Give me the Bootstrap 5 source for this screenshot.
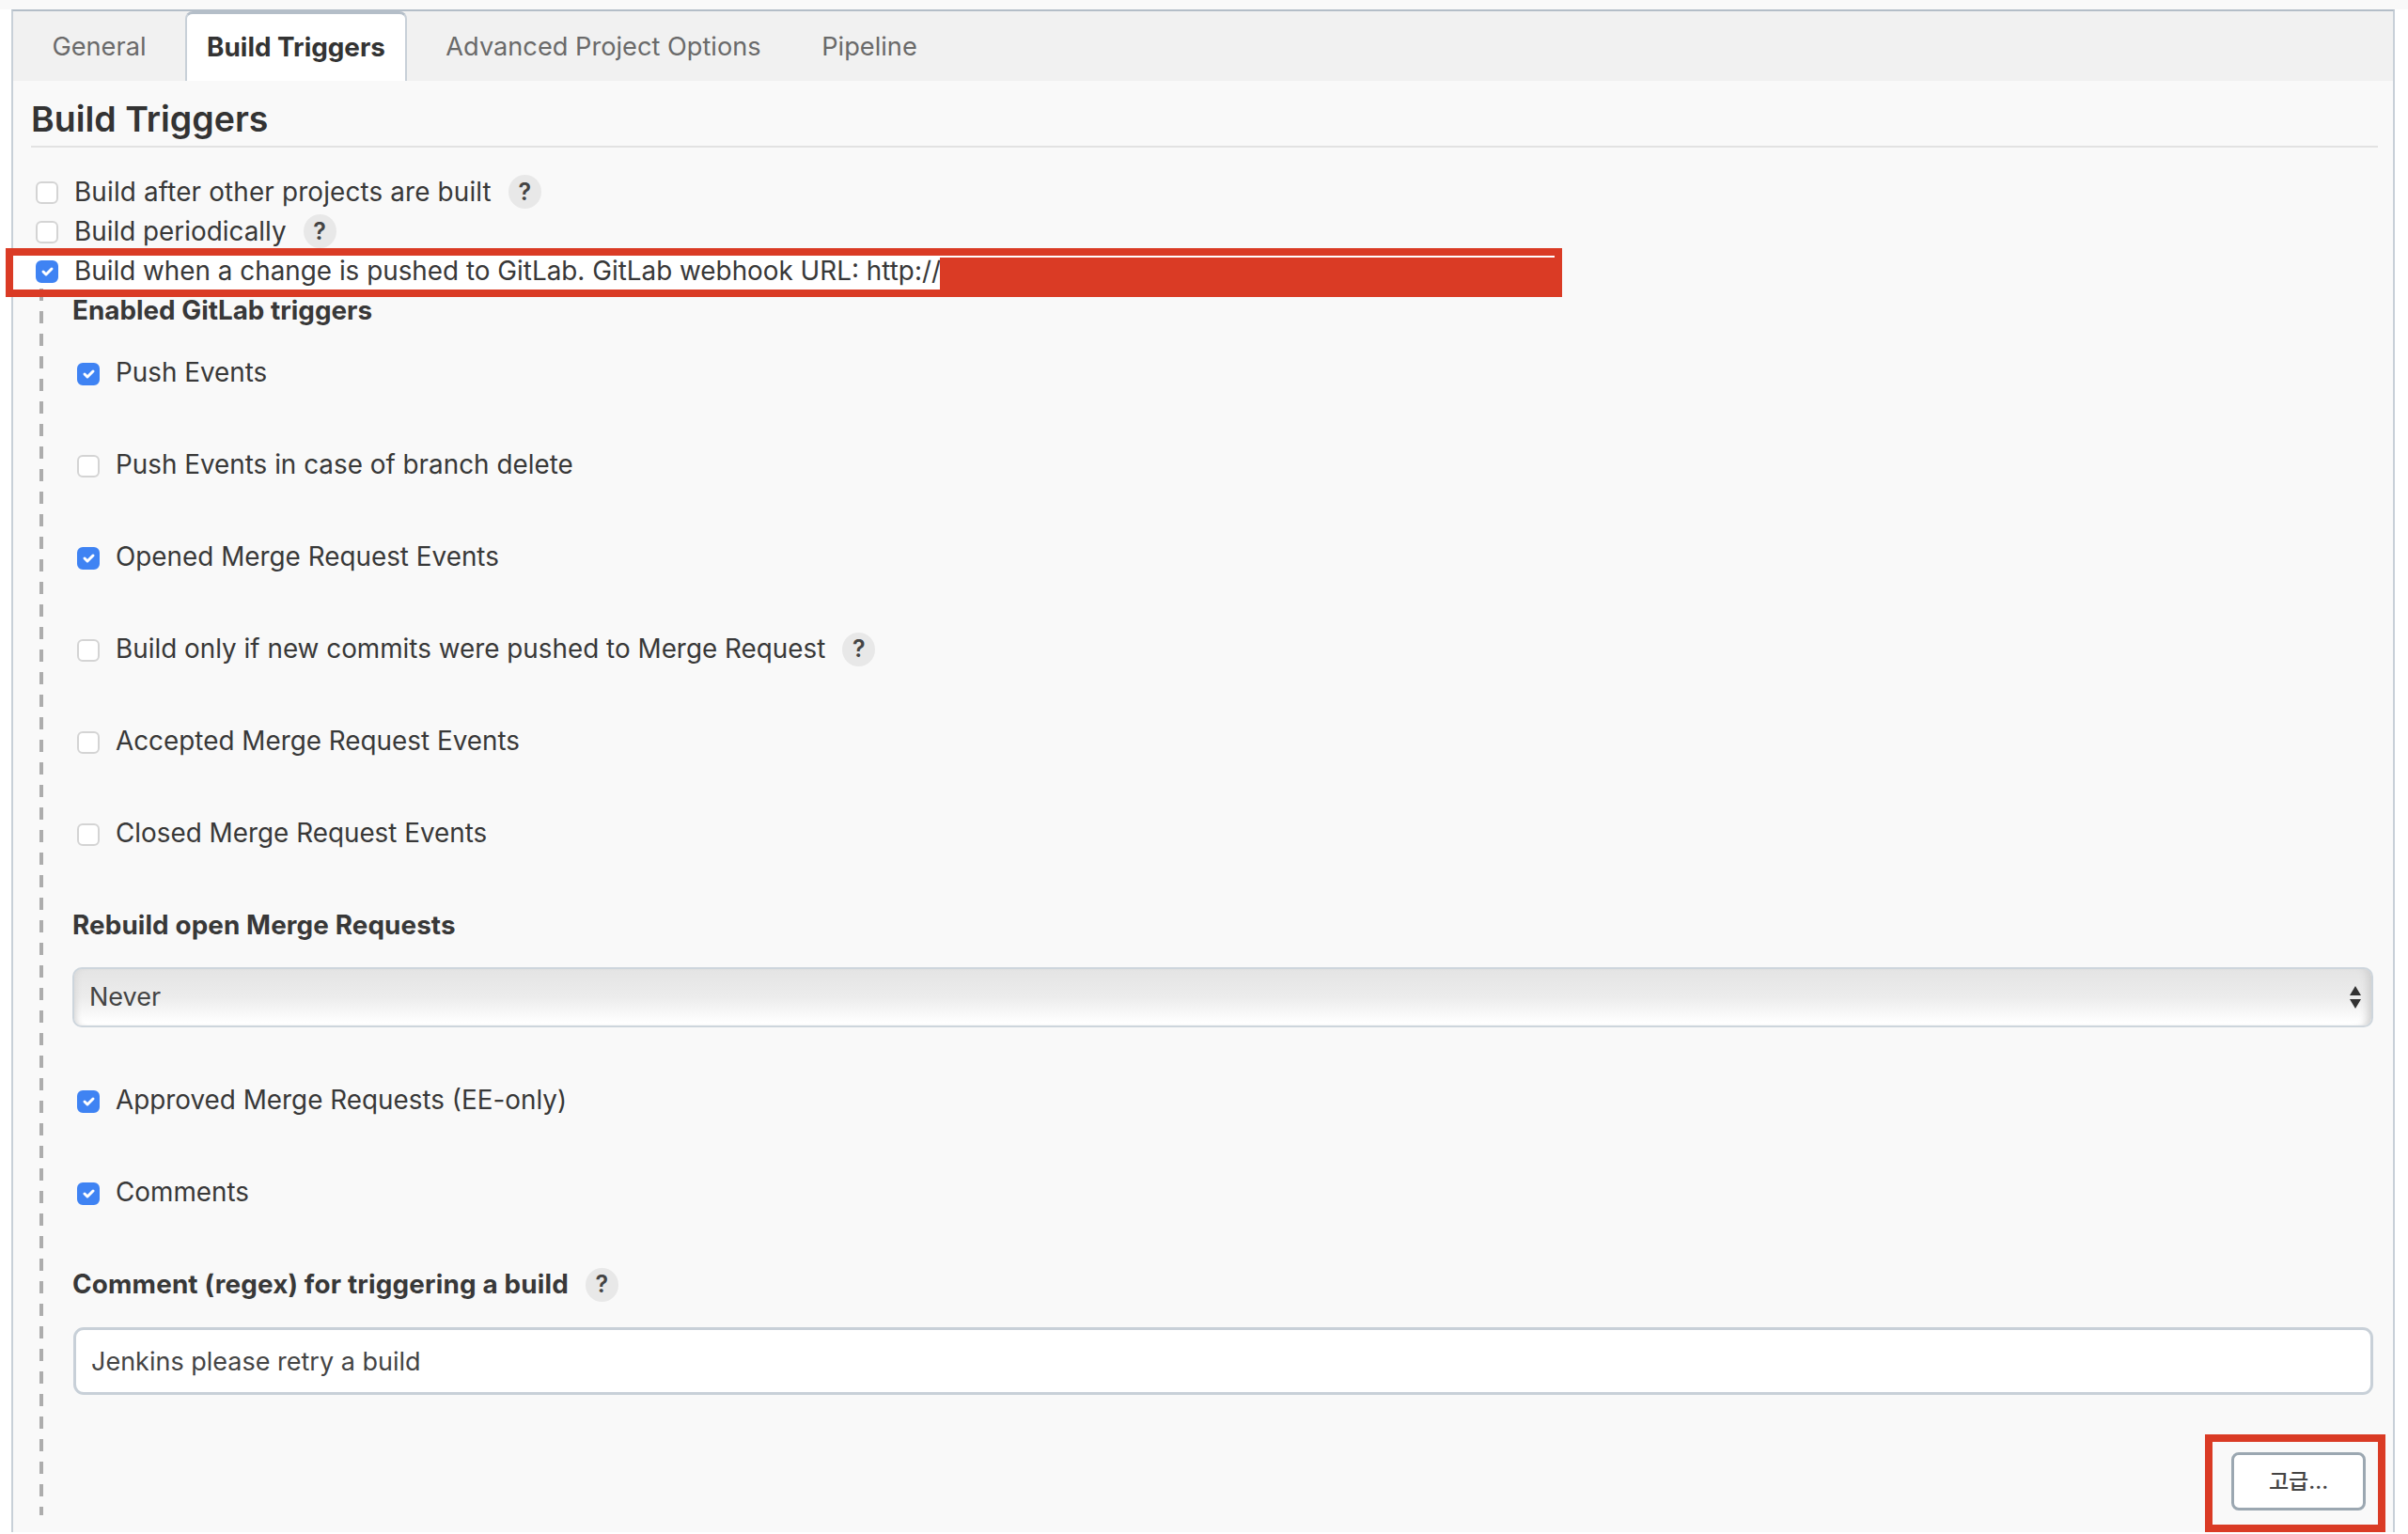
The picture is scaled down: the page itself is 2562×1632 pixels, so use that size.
<!DOCTYPE html>
<html lang="en"><head><meta charset="utf-8"><title>Build Triggers</title>
<link href="https://cdn.jsdelivr.net/npm/bootstrap@5.3.0/dist/css/bootstrap.min.css" rel="stylesheet">
<style>
html,body{margin:0;background:#fff;}
body{font-family:Inter,"Noto Sans CJK KR",sans-serif;font-size:27.85px;color:#383838;height:1632px;overflow:hidden;}
.top-strip{height:10px;background:#f9f9f9;}
.job-frame{position:relative;margin-left:12px;width:2536px;height:1620px;background:#f9f9f9;border:solid #c8d0d8;border-top-color:#b4bec8;border-width:2px 2px 0 2px;}
.job-tabs{height:74px;background:#f1f1f1;border:0;padding-left:0;flex-wrap:nowrap;}
.job-tabs .nav-link{height:74px;padding:0;margin:0;border:0;border-radius:0;color:#6a6a6a;line-height:76px;text-align:center;background:transparent;font-size:27.2px;}
.job-tabs .nav-link.active{background:#fff;color:#333;font-weight:700;font-size:27.85px;border:2px solid #c8d0d8;border-bottom:0;border-top:3px solid #b4bec8;border-radius:8px 8px 0 0;line-height:70px;}
.tab-a{width:183px;}
.tab-b{width:236px;}
.tab-c{width:418px;}
.tab-d{width:148px;}
.job-body{padding:0 16px 0 20px;}
.sec-title{font-size:37.5px;font-weight:600;color:#333;height:71px;line-height:81px;margin:0;margin-left:-1px;border-bottom:2px solid #e2e2e2;}
.top-rows{padding-top:26px;}
.trow{height:42px;display:flex;align-items:center;line-height:42px;white-space:nowrap;}
.trow-wide{letter-spacing:.15px;}
.trow-flag{background:#fff;margin-left:-20px;padding-left:20px;width:1006px;}
.gitrow{height:98px;display:flex;align-items:center;white-space:nowrap;}
.gitrow-first{margin-top:-3px;}
.trow .form-check-input{margin:1px 17px 0 4px;}
.gitrow .form-check-input{margin:1px 17px 0 48px;}
.job-check.form-check-input{width:24px;height:24px;flex:none;border:2px solid #d4d4d4;border-radius:6px;background-color:#fff;}
.job-check.form-check-input:checked{background-color:#3f83f3;border-color:#3f83f3;}
.help-mark{display:inline-flex;width:35px;height:36px;border-radius:50%;background:#e8e8e8;align-items:center;justify-content:center;font-weight:600;font-size:25px;color:#444;margin-left:18px;letter-spacing:0;}
.gitlab-block{position:relative;}
.dash-line{position:absolute;left:8px;top:-2px;height:1305px;width:4px;background:repeating-linear-gradient(to bottom,#adadad 0,#adadad 13px,transparent 13px,transparent 24px);}
.sub-title{height:42px;line-height:42px;font-weight:700;padding-left:43px;white-space:nowrap;}
.lbl-row{height:98px;display:flex;align-items:center;font-weight:700;padding-left:43px;white-space:nowrap;}
.lbl-rebuild{letter-spacing:.1px;}
.lbl-comment{letter-spacing:.16px;}
.never-select{margin-left:43px;width:2448px;height:64px;margin-top:-5px;margin-bottom:29px;border:2px solid #cdd5dc;border-radius:10px;background:linear-gradient(to bottom,#e4e4e4,#ececec 50%,#fff 95%);box-shadow:inset 6px 0 6px -4px #d8d8d8,inset -10px 0 8px -6px #cfcfcf;padding:0 11px 0 16px;display:flex;align-items:center;justify-content:space-between;color:#444;font-size:27px;}
.sel-arrows{display:block;}
.regex-input.form-control{margin-left:44px;margin-top:-4px;width:2447px;height:72px;border:3px solid #c8d0d8;border-radius:11px;padding:0 16px;font-size:27px;color:#444;background:#fff;box-shadow:none;}
.action-row{display:flex;justify-content:flex-end;padding-right:13px;margin-top:61px;}
.adv-btn.btn{width:143px;height:62px;border:3px solid #9ba7b1;border-radius:8px;background:#fff;color:#444;font-size:23px;font-weight:500;padding:0;}
.anno-box{position:absolute;border:8px solid #da3b25;pointer-events:none;}
.anno-url{left:-8px;top:252px;width:1656px;height:52px;}
.anno-fill{position:absolute;left:986px;top:0;right:0;bottom:0;background:#da3b25;border-top:2px solid #fff;}
.anno-adv{left:2332px;top:1514px;width:192px;height:104px;}
</style></head><body>
<div class="top-strip"></div>
<div class="job-frame">
  <ul class="nav nav-tabs job-tabs">
    <li class="nav-item"><a class="nav-link tab-a" href="#">General</a></li>
    <li class="nav-item"><a class="nav-link active tab-b" href="#">Build Triggers</a></li>
    <li class="nav-item"><a class="nav-link tab-c" href="#">Advanced Project Options</a></li>
    <li class="nav-item"><a class="nav-link tab-d" href="#">Pipeline</a></li>
  </ul>
  <div class="job-body">
    <h2 class="sec-title">Build Triggers</h2>
    <div class="top-rows">
      <div class="trow trow-wide"><input class="form-check-input job-check" type="checkbox"><span>Build after other projects are built</span><span class="help-mark">?</span></div>
      <div class="trow"><input class="form-check-input job-check" type="checkbox"><span>Build periodically</span><span class="help-mark">?</span></div>
      <div class="trow trow-flag"><input class="form-check-input job-check" type="checkbox" checked><span>Build when a change is pushed to GitLab. GitLab webhook URL: http://</span></div>
    </div>
    <div class="gitlab-block">
      <div class="dash-line"></div>
      <div class="sub-title">Enabled GitLab triggers</div>
      <div class="gitrow gitrow-first"><input class="form-check-input job-check" type="checkbox" checked><span>Push Events</span></div>
      <div class="gitrow"><input class="form-check-input job-check" type="checkbox"><span>Push Events in case of branch delete</span></div>
      <div class="gitrow"><input class="form-check-input job-check" type="checkbox" checked><span>Opened Merge Request Events</span></div>
      <div class="gitrow"><input class="form-check-input job-check" type="checkbox"><span>Build only if new commits were pushed to Merge Request</span><span class="help-mark">?</span></div>
      <div class="gitrow"><input class="form-check-input job-check" type="checkbox"><span>Accepted Merge Request Events</span></div>
      <div class="gitrow"><input class="form-check-input job-check" type="checkbox"><span>Closed Merge Request Events</span></div>
      <div class="lbl-row lbl-rebuild">Rebuild open Merge Requests</div>
      <div class="never-select"><span>Never</span><svg class="sel-arrows" width="12" height="24" viewBox="0 0 12 24"><path d="M6 0 12 10H0ZM0 14H12L6 24Z" fill="#333"/></svg></div>
      <div class="gitrow"><input class="form-check-input job-check" type="checkbox" checked><span>Approved Merge Requests (EE-only)</span></div>
      <div class="gitrow"><input class="form-check-input job-check" type="checkbox" checked><span>Comments</span></div>
      <div class="lbl-row lbl-comment">Comment (regex) for triggering a build<span class="help-mark">?</span></div>
      <input class="form-control regex-input" type="text" value="Jenkins please retry a build">
      <div class="action-row"><button class="btn adv-btn" type="button">고급...</button></div>
    </div>
  </div>
  <div class="anno-box anno-url"><div class="anno-fill"></div></div>
  <div class="anno-box anno-adv"></div>
</div>
</body></html>
